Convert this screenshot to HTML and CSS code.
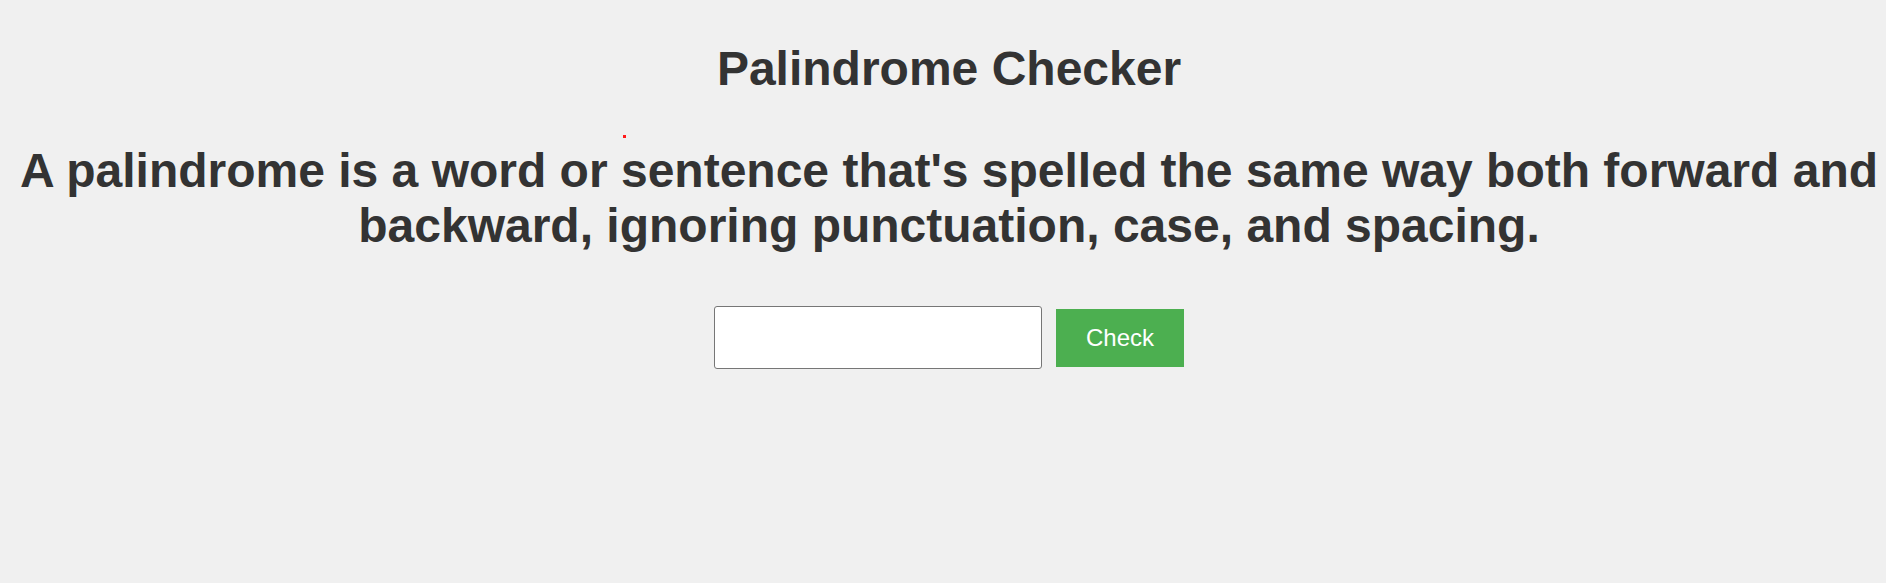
FILE: index.html
```html
<!DOCTYPE html>
<html lang="en">
<head>
<meta charset="utf-8">
<title>Palindrome Checker</title>
<link rel="stylesheet" href="styles.css">
</head>
<body>
<main class="page">
  <h1 class="title">Palindrome Checker</h1>
  <p class="intro">A palindrome is a word or sentence that's spelled the same way both forward and backward, ignoring punctuation, case, and spacing.</p>
  <div class="form-row">
    <input class="text-input" type="text" aria-label="Text to check">
    <button class="check-btn" type="button">Check</button>
  </div>
</main>
<span class="dot"></span>
</body>
</html>
```
FILE: styles.css
```css
html, body {
  margin: 0;
  padding: 0;
  background: #f0f0f0;
}
body {
  font-family: "Liberation Sans", Arial, sans-serif;
  color: #333333;
  position: relative;
  min-height: 583px;
}
.page {
  padding: 41px 2px 0 14px;
  text-align: center;
}
.title {
  margin: 0;
  font-size: 48px;
  font-weight: bold;
  line-height: 55px;
}
.intro {
  margin: 47px 0 0 0;
  font-size: 48px;
  font-weight: bold;
  line-height: 55px;
}
.form-row {
  margin-top: 53px;
  display: flex;
  justify-content: center;
  align-items: center;
  gap: 14px;
}
.text-input {
  box-sizing: border-box;
  width: 328px;
  height: 63px;
  border: 1px solid #767676;
  border-radius: 3px;
  background: #ffffff;
  font-family: "Liberation Sans", Arial, sans-serif;
  font-size: 24px;
  padding: 0 10px;
  margin: 0;
}
.check-btn {
  box-sizing: border-box;
  width: 128px;
  height: 58px;
  border: none;
  background: #4caf50;
  color: #ffffff;
  font-family: "Liberation Sans", Arial, sans-serif;
  font-size: 24px;
  padding: 0;
  margin: 0;
  cursor: pointer;
}
.dot {
  position: absolute;
  left: 623px;
  top: 135px;
  width: 3px;
  height: 3px;
  background: #ff1a1a;
}
```
